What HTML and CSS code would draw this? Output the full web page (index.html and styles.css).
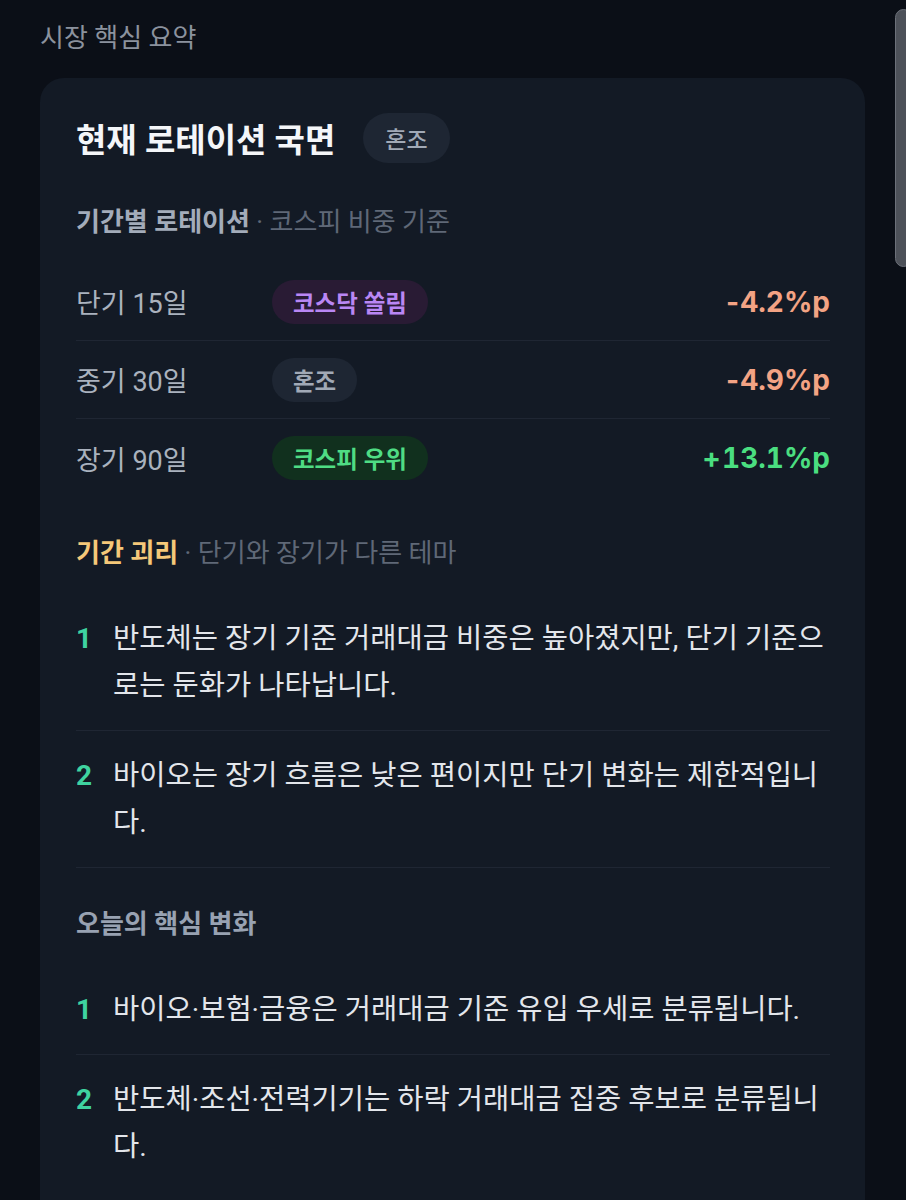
FILE: index.html
```html
<!DOCTYPE html>
<html lang="ko">

<head>
	<meta charset="UTF-8" />
	<meta name="viewport" content="width=device-width, initial-scale=1.0" />
	<title>시장 핵심 요약</title>
	<link rel="stylesheet" href="styles.css">
</head>

<body>
	<div class="scroll-thumb"></div>

	<p class="page-title">시장 핵심 요약</p>

	<div class="card">
		<div class="card-head">
			<h2 class="card-title">현재 로테이션 국면</h2>
			<span class="chip chip-mixed chip-lg">혼조</span>
		</div>

		<div class="section section-first">
			<p class="section-label"><b>기간별 로테이션</b><span class="sub"> · 코스피 비중 기준</span></p>
			<div class="rows">
				<div class="row">
					<span class="row-name">단기 15일</span>
					<span class="chip chip-kosdaq">코스닥 쏠림</span>
					<span class="row-value down"><span class="sign">-</span>4.2%p</span>
				</div>
				<div class="row">
					<span class="row-name">중기 30일</span>
					<span class="chip chip-mixed">혼조</span>
					<span class="row-value down"><span class="sign">-</span>4.9%p</span>
				</div>
				<div class="row">
					<span class="row-name">장기 90일</span>
					<span class="chip chip-kospi">코스피 우위</span>
					<span class="row-value up"><span class="sign">+</span>13.1%p</span>
				</div>
			</div>
		</div>

		<div class="section section-split">
			<p class="section-label"><b class="warn">기간 괴리</b><span class="sub"> · 단기와 장기가 다른 테마</span></p>
			<ol class="notes">
				<li><span class="num">1</span><span class="text">반도체는 장기 기준 거래대금 비중은 높아졌지만, 단기 기준으로는 둔화가 나타납니다.</span></li>
				<li><span class="num">2</span><span class="text">바이오는 장기 흐름은 낮은 편이지만 단기 변화는 제한적입니다.</span></li>
			</ol>
		</div>

		<div class="section">
			<p class="section-label"><b class="plain">오늘의 핵심 변화</b></p>
			<ol class="notes">
				<li><span class="num">1</span><span class="text">바이오·보험·금융은 거래대금 기준 유입 우세로 분류됩니다.</span></li>
				<li><span class="num">2</span><span class="text">반도체·조선·전력기기는 하락 거래대금 집중 후보로 분류됩니다.</span></li>
			</ol>
		</div>
	</div>
</body>

</html>
```

FILE: styles.css
```css
* {
	box-sizing: border-box;
}

body {
	margin: 0;
	padding: 0 41px 0 40px;
	background-color: #0b0f17;
	font-family: Roboto, "Noto Sans CJK KR", sans-serif;
	color: #e3e6eb;
	overflow: hidden;
}

p,
h2,
ol {
	margin: 0;
	padding: 0;
}

/* overlay scrollbar of the page */
.scroll-thumb {
	position: fixed;
	top: 9px;
	right: -6px;
	width: 17px;
	height: 258px;
	border-radius: 9px;
	background-color: #4d5159;
	border: 1px solid #6c7079;
}

.page-title {
	font-size: 26px;
	line-height: 36px;
	padding-top: 20px;
	color: #8b929e;
}

.card {
	margin-top: 22px;
	padding: 35px 35px 60px 36px;
	background-color: #131a25;
	border-radius: 24px;
	min-height: 1200px;
}

.card-head {
	display: flex;
	align-items: center;
	gap: 28px;
}

.card-title {
	font-size: 33px;
	font-weight: 700;
	color: #f4f6f9;
}

.chip {
	display: inline-flex;
	align-items: center;
	height: 44px;
	padding: 0 21px;
	border-radius: 22px;
	font-size: 23.5px;
	font-weight: 600;
}

.chip-lg {
	height: 50px;
	border-radius: 25px;
	padding: 0 22px;
	font-size: 23px;
	font-weight: 500;
}

.chip-mixed {
	background-color: #1e2633;
	color: #a1a9b6;
}

.chip-kosdaq {
	background-color: #291b34;
	color: #b987f4;
}

.chip-kospi {
	background-color: #11301e;
	color: #4fdc84;
}

.section {
	margin-top: 38px;
}

.section-first {
	margin-top: 41px;
}

.section-split {
	border-bottom: 1px solid #1f2633;
}

.section-label {
	font-size: 26px;
	line-height: 36px;
}

.section-label b {
	font-weight: 700;
	color: #a3acba;
}

.section-label b.warn {
	color: #f5c879;
}

.section-label b.plain {
	font-weight: 600;
	color: #98a2b2;
}

.section-label .sub {
	color: #5f6877;
}

.rows {
	margin-top: 23px;
}

.row {
	display: flex;
	align-items: center;
	height: 78px;
	border-bottom: 1px solid #1f2633;
}

.row:last-child {
	border-bottom: none;
}

.row-name {
	width: 196px;
	font-size: 27px;
	color: #aab2be;
}

.row-value {
	margin-left: auto;
	font-family: Inter, "Noto Sans CJK KR", sans-serif;
	font-variant-numeric: tabular-nums;
	font-size: 28px;
	font-weight: 700;
}

.row-value .sign {
	font-variant-numeric: normal;
	margin-right: 1px;
}

.row-value.down {
	color: #f3a384;
}

.row-value.up {
	color: #4ade80;
}

.notes {
	list-style: none;
	margin-top: 23px;
}

.notes li {
	display: flex;
	gap: 21px;
	padding: 21px 0;
	border-bottom: 1px solid #1f2633;
	font-size: 28.5px;
	line-height: 47px;
}

.notes li:last-child {
	border-bottom: none;
}

.num {
	font-size: 28px;
	font-weight: 700;
	color: #3fd3a0;
}

.text {
	flex: 1;
	color: #e3e6eb;
}
```
